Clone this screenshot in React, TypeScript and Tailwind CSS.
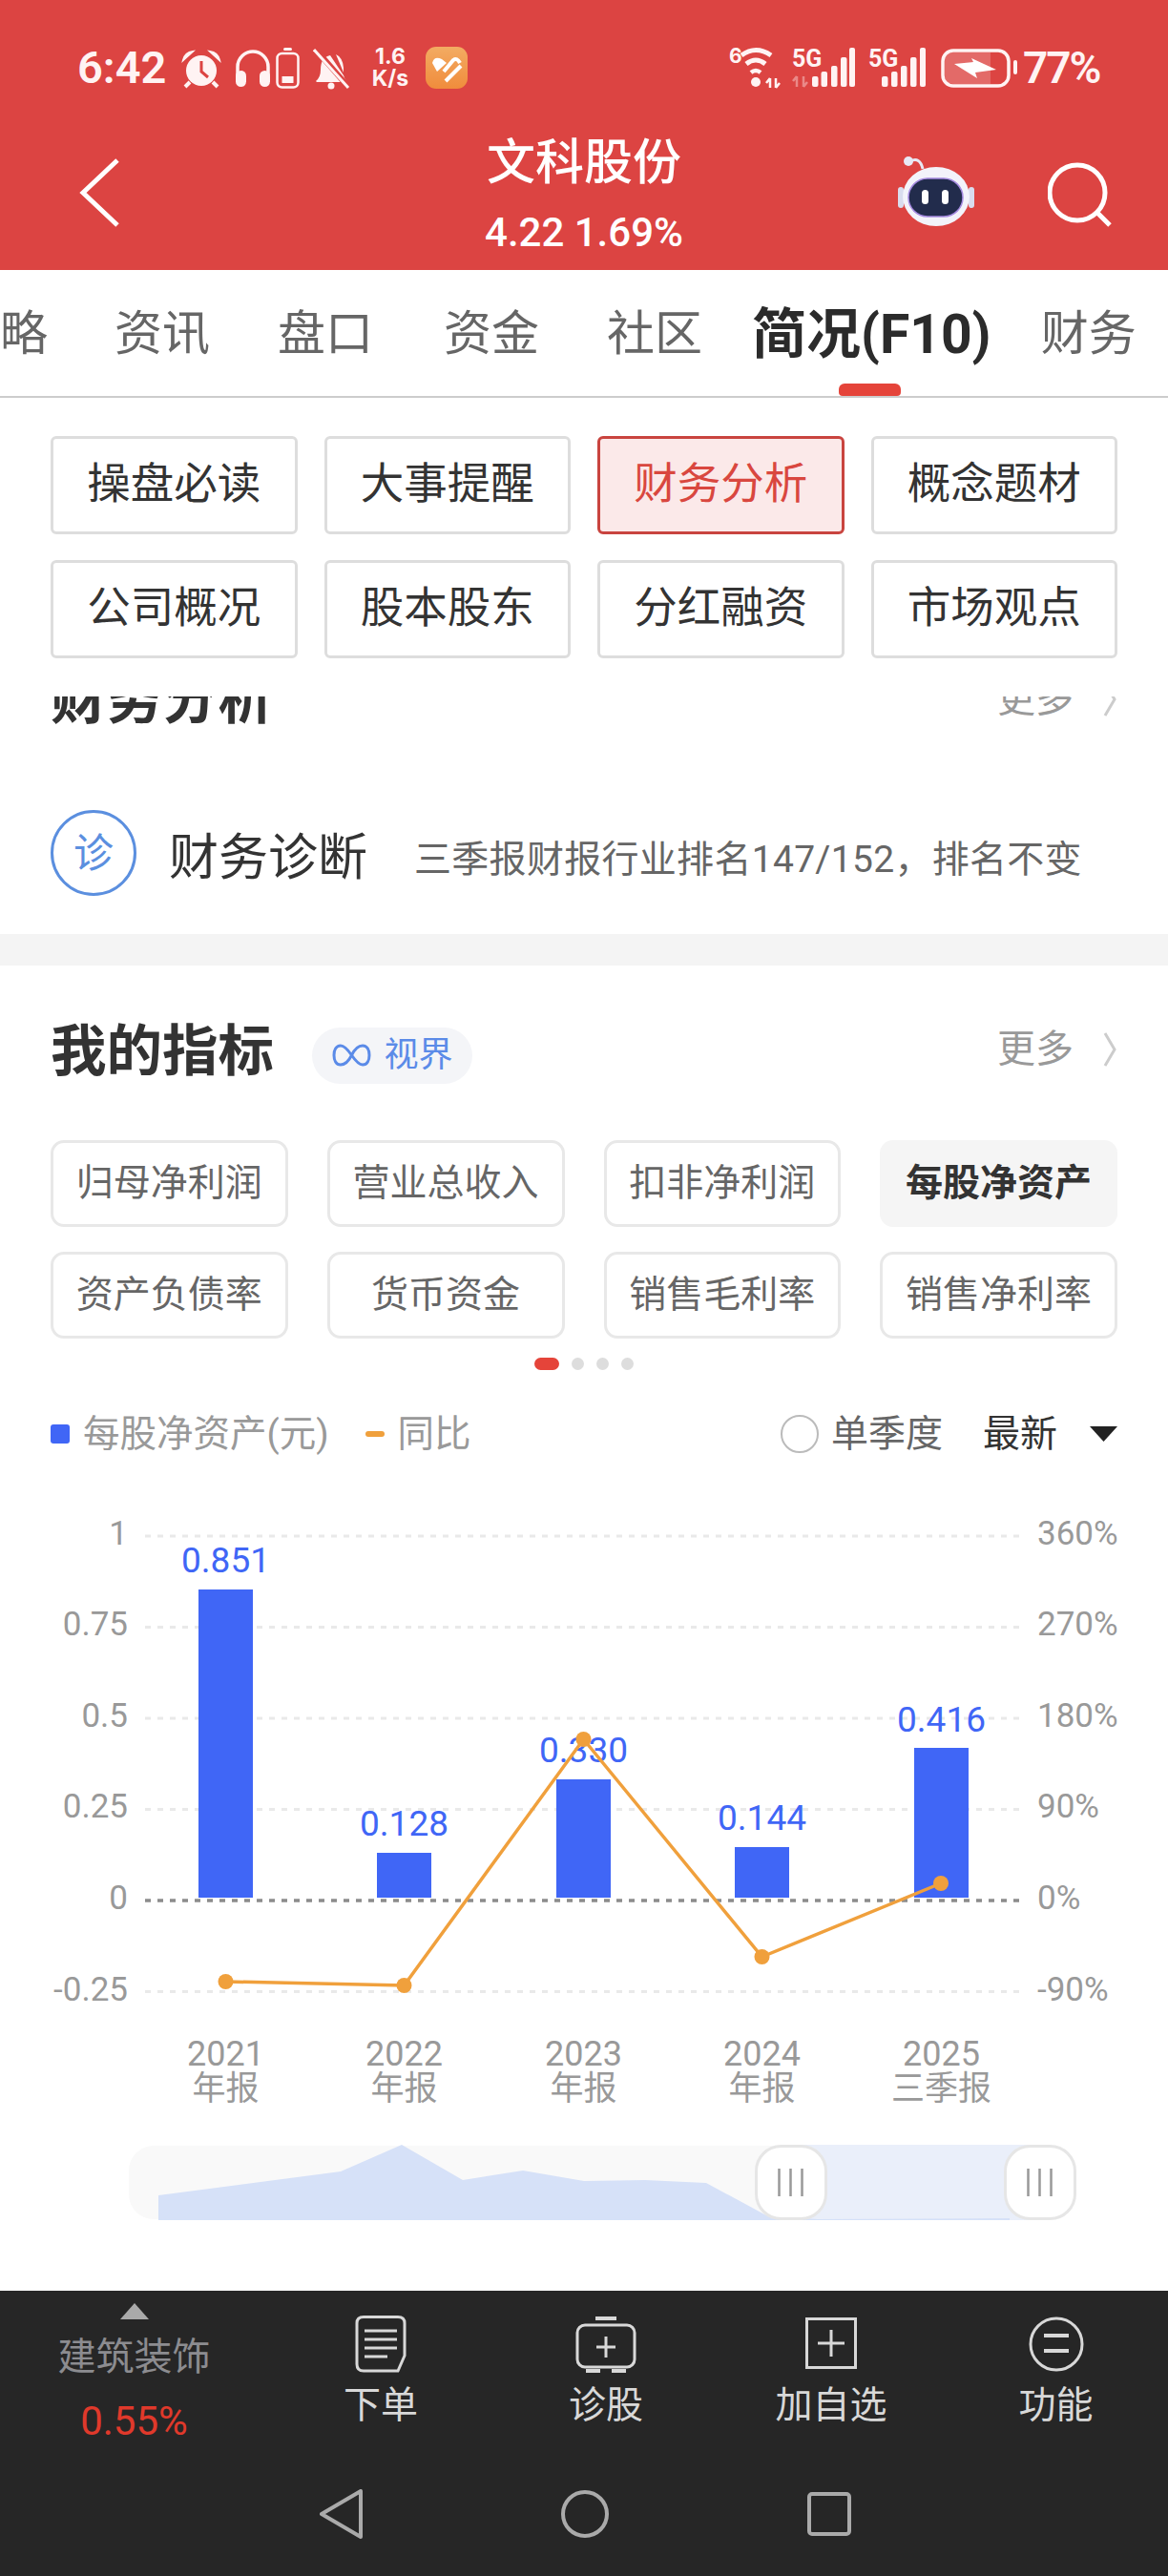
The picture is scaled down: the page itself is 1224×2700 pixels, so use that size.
const tabs = [
  { label: "略", cls: "ml-0 text-[#666] text-[50px] font-normal" },
  { label: "资讯", cls: "ml-[70px] text-[#666] text-[50px] font-normal" },
  { label: "盘口", cls: "ml-[71px] text-[#666] text-[50px] font-normal" },
  { label: "资金", cls: "ml-[74px] text-[#666] text-[50px] font-normal" },
  { label: "社区", cls: "ml-[71px] text-[#666] text-[50px] font-normal" },
  { label: "简况(F10)", cls: "ml-[52px] text-[#2b2b2b] text-[57px] font-bold" },
  { label: "财务", cls: "ml-[52px] text-[#666] text-[50px] font-normal" },
];

const shortcuts = ["操盘必读", "大事提醒", "财务分析", "概念题材", "公司概况", "股本股东", "分红融资", "市场观点"];
const metrics = ["归母净利润", "营业总收入", "扣非净利润", "每股净资产", "资产负债率", "货币资金", "销售毛利率", "销售净利率"];

const grid = [1610, 1705.5, 1801, 1896.5, 2087.5];
const leftAxis = [
  ["1", 1607],
  ["0.75", 1702],
  ["0.5", 1798],
  ["0.25", 1893],
  ["0", 1989],
  ["-0.25", 2085],
];
const rightAxis = [
  ["360%", 1607],
  ["270%", 1702],
  ["180%", 1798],
  ["90%", 1893],
  ["0%", 1989],
  ["-90%", 2085],
];
const bars = [
  { x: 208, top: 1666, value: "0.851", labelY: 1635, year: "2021", kind: "年报" },
  { x: 395, top: 1942, value: "0.128", labelY: 1911, year: "2022", kind: "年报" },
  { x: 583, top: 1865, value: "0.330", labelY: 1834, year: "2023", kind: "年报" },
  { x: 770, top: 1936, value: "0.144", labelY: 1905, year: "2024", kind: "年报" },
  { x: 958, top: 1832, value: "0.416", labelY: 1802, year: "2025", kind: "三季报" },
];
const yoy = [
  [236.5, 2077],
  [423.5, 2081],
  [611.5, 1823],
  [798.5, 2051],
  [986, 1974],
];

function StatusBar() {
  return (
    <div className="flex h-[112px] items-start pl-[81px] pt-[49px] text-[#fff3f3]">
      <span className="mt-[-3px] w-[100px] font-['Roboto'] text-[47px] leading-[50px] font-semibold">6:42</span>
      <svg className="ml-[9px] mt-[3px] h-[41px] w-[42px]" viewBox="0 0 42 41">
        <circle cx="21" cy="22" r="16" fill="#fff3f3" />
        <path d="M2 11 Q4 3 12 2 Z M40 11 Q38 3 30 2 Z" fill="#fff3f3" stroke="#fff3f3" strokeWidth="2" />
        <path d="M21 12 V23 L28 29" fill="none" stroke="#dc4442" strokeWidth="3" />
        <path d="M9 34 L4 39 M33 34 L38 39" stroke="#fff3f3" strokeWidth="4" />
      </svg>
      <svg className="ml-[14px] mt-[3px] h-[40px] w-[38px]" viewBox="0 0 38 40">
        <path d="M3 28 V18 A16 16 0 0 1 35 18 V28" fill="none" stroke="#fff3f3" strokeWidth="3.5" />
        <rect x="1" y="22" width="11" height="17" rx="5.5" fill="#fff3f3" />
        <rect x="26" y="22" width="11" height="17" rx="5.5" fill="#fff3f3" />
      </svg>
      <svg className="ml-[5px] mt-[1px] h-[43px] w-[25px]" viewBox="0 0 25 43">
        <rect x="8" y="0" width="9" height="3" rx="1.5" fill="#fff3f3" />
        <rect x="1.5" y="6" width="22" height="35.5" rx="5" fill="none" stroke="#fff3f3" strokeWidth="2.5" />
        <rect x="6.5" y="30" width="12" height="7" fill="#fff3f3" />
      </svg>
      <svg className="ml-[14px] mt-[2px] h-[43px] w-[39px]" viewBox="0 0 39 43">
        <path d="M3 34 Q8 30 8 22 Q8 9 18 7 L32 28 Q33 32 36 35 H4 Z" fill="#fff3f3" />
        <path d="M24 6 Q31 9 32 20 V25 Z" fill="#fff3f3" />
        <circle cx="19" cy="39" r="3.5" fill="#fff3f3" />
        <path d="M3 1 L37 40" stroke="#dc4442" strokeWidth="6" />
        <path d="M1 1 L37 41" stroke="#fff3f3" strokeWidth="3" />
      </svg>
      <div className="ml-[21px] mt-[-1px] flex w-[42px] flex-col items-center font-['Inter'] text-[23px] leading-[23px] font-bold">
        <span>1.6</span>
        <span>K/s</span>
      </div>
      <svg className="ml-[16px] h-[44px] w-[44px]" viewBox="0 0 44 44">
        <defs>
          <linearGradient id="tile" x1="0" y1="0" x2="0" y2="1">
            <stop offset="0" stopColor="#f3ab62" />
            <stop offset="1" stopColor="#f08c3c" />
          </linearGradient>
        </defs>
        <rect width="44" height="44" rx="11" fill="url(#tile)" />
        <path d="M7 17 Q9 9 17 13 L22 17 L12 26 Z" fill="#fff" />
        <path d="M19 26 L29 14 Q33 11 36 17" fill="none" stroke="#fff" strokeWidth="4" />
        <path d="M21 36 L37 20" stroke="#fff" strokeWidth="4" />
      </svg>
      <svg className="ml-[274px] h-[46px] w-[57px] overflow-visible" viewBox="0 0 57 46">
        <text x="0" y="17" fill="#fff3f3" fontSize="21" fontWeight="700" fontFamily="Inter">6</text>
        <path d="M13 9 Q28 -2 44 9" fill="none" stroke="#fff3f3" strokeWidth="5" />
        <path d="M18 18 Q28 10 38 18" fill="none" stroke="#fff3f3" strokeWidth="5" />
        <path d="M23 27 Q28 23 33 27" fill="none" stroke="#fff3f3" strokeWidth="4.5" />
        <circle cx="28" cy="37" r="5" fill="#fff3f3" />
        <path d="M43 33 V43 M49 33 V43 M39 38 L43 33 M53 38 L49 43" stroke="#fff3f3" strokeWidth="2.5" fill="none" />
      </svg>
      <svg className="ml-[9px] h-[46px] w-[66px] overflow-visible" viewBox="0 0 66 46">
        <text x="0" y="21" fill="#fff3f3" fontSize="25" fontWeight="700" fontFamily="Roboto">5G</text>
        <path d="M5 31 V42 M12 31 V42 M1 36 L5 31 M16 37 L12 42" stroke="#fff3f3" strokeOpacity="0.4" strokeWidth="2.5" fill="none" />
        <rect x="21" y="31" width="6.5" height="11" rx="2" fill="#fff3f3" />
        <rect x="30.5" y="26" width="6.5" height="16" rx="2" fill="#fff3f3" />
        <rect x="41" y="20" width="6.5" height="22" rx="2" fill="#fff3f3" />
        <rect x="51" y="11" width="6.5" height="31" rx="2" fill="#fff3f3" />
        <rect x="60" y="1" width="6" height="41" rx="2" fill="#fff3f3" />
      </svg>
      <svg className="ml-[14px] h-[46px] w-[60px] overflow-visible" viewBox="0 0 60 46">
        <text x="0" y="21" fill="#fff3f3" fontSize="25" fontWeight="700" fontFamily="Roboto">5G</text>
        <rect x="14" y="31" width="6.5" height="11" rx="2" fill="#fff3f3" />
        <rect x="24" y="26" width="6.5" height="16" rx="2" fill="#fff3f3" />
        <rect x="34" y="20" width="6.5" height="22" rx="2" fill="#fff3f3" />
        <rect x="44" y="11" width="6.5" height="31" rx="2" fill="#fff3f3" />
        <rect x="54" y="1" width="6" height="41" rx="2" fill="#fff3f3" />
      </svg>
      <svg className="ml-[16px] mt-[2px] h-[41px] w-[80px]" viewBox="0 0 80 41">
        <rect x="2" y="2" width="69" height="37" rx="11" fill="none" stroke="#fff3f3" strokeWidth="3.5" />
        <path d="M4 13 Q4 4 13 4 H52 V37 H13 Q4 37 4 28 Z" fill="#fff3f3" fillOpacity="0.22" />
        <path d="M14 16 L34 14 L32 10 L58 22 L36 25 L38 31 Z" fill="#fff" />
        <rect x="76" y="12" width="4" height="15" rx="2" fill="#fff3f3" />
      </svg>
      <span className="ml-[6px] mt-[-3px] font-['Roboto'] text-[46px] leading-[50px] font-semibold tracking-[-2px]">77%</span>
    </div>
  );
}

function TitleBar() {
  return (
    <div className="relative flex h-[171px] items-start">
      <svg className="ml-[82px] mt-[54px] h-[72px] w-[44px]" viewBox="0 0 44 72">
        <path d="M41 2 L5 36 L41 70" fill="none" stroke="#fff" strokeWidth="5" />
      </svg>
      <div className="absolute left-[412px] top-[25px] flex w-[400px] flex-col items-center text-white">
        <span className="mt-[3px] text-[51px] leading-[62px] font-medium">文科股份</span>
        <span className="mt-[17px] text-[42px] leading-[50px] font-medium">4.22 1.69%</span>
      </div>
      <svg className="ml-[814px] mt-[52px] h-[74px] w-[84px]" viewBox="0 0 84 74">
        <path d="M14 5 Q24 0 27 13" fill="none" stroke="#e8e8f4" strokeWidth="3" />
        <circle cx="12" cy="5" r="5" fill="#e8e8f4" />
        <rect x="1" y="32" width="6" height="22" rx="3" fill="#d9dcee" />
        <rect x="75" y="32" width="6" height="22" rx="3" fill="#d9dcee" />
        <ellipse cx="41" cy="42" rx="35" ry="31" fill="#f3f3fa" />
        <rect x="12" y="23" width="57" height="40" rx="20" fill="#222c4c" stroke="#a58ae0" strokeWidth="1.5" />
        <rect x="26" y="35" width="7" height="15" rx="3.5" fill="#fff" />
        <rect x="47" y="35" width="7" height="15" rx="3.5" fill="#fff" />
      </svg>
      <svg className="ml-[74px] mt-[58px] h-[72px] w-[72px]" viewBox="0 0 72 72">
        <circle cx="31" cy="32" r="29" fill="none" stroke="#fff" strokeWidth="5" />
        <path d="M52 53 L65 66" stroke="#fff" strokeWidth="5" />
      </svg>
    </div>
  );
}

function MoreLink() {
  return (
    <div className="flex items-center">
      <span className="text-[40px] leading-[58px] text-[#999]">更多</span>
      <svg className="ml-[31px] h-[38px] w-[15px]" viewBox="0 0 15 38">
        <path d="M2 2 L12 19 L2 36" fill="none" stroke="#ccc" strokeWidth="3" />
      </svg>
    </div>
  );
}

function Chart() {
  return (
    <svg className="h-[800px] w-[1224px]" viewBox="0 1560 1224 800" fontFamily="Roboto, 'Noto Sans CJK SC', sans-serif">
      {grid.map((y) => (
        <line key={y} x1="152" x2="1070" y1={y} y2={y} stroke="#e9e9e9" strokeWidth="3" strokeDasharray="6 7" />
      ))}
      {leftAxis.map(([t, y]) => (
        <text key={t} x="134" y={y} textAnchor="end" dominantBaseline="central" fontSize="35" fill="#999">{t}</text>
      ))}
      {rightAxis.map(([t, y]) => (
        <text key={t} x="1087" y={y} dominantBaseline="central" fontSize="35" fill="#999">{t}</text>
      ))}
      {bars.map((b) => (
        <g key={b.year}>
          <rect x={b.x} y={b.top} width="57" height={1989 - b.top} fill="#4066f6" />
          <text x={b.x + 28.5} y={b.labelY} textAnchor="middle" dominantBaseline="central" fontSize="37" fill="#4066f6">{b.value}</text>
          <text x={b.x + 28.5} y="2153" textAnchor="middle" dominantBaseline="central" fontSize="36" fill="#999">{b.year}</text>
          <text x={b.x + 28.5} y="2189" textAnchor="middle" dominantBaseline="central" fontSize="35" fill="#999">{b.kind}</text>
        </g>
      ))}
      <line x1="152" x2="1070" y1="1992" y2="1992" stroke="#8c8c8c" strokeWidth="3.5" strokeDasharray="6 7" />
      <polyline points={yoy.map((p) => p.join(",")).join(" ")} fill="none" stroke="#f0a03c" strokeWidth="3.5" />
      {yoy.map(([x, y]) => (
        <circle key={x} cx={x} cy={y} r="8" fill="#f0a03c" />
      ))}

      <rect x="135" y="2249" width="960" height="77" rx="26" fill="#f9f9f9" />
      <rect x="826" y="2248" width="269" height="79" fill="#eaeffa" />
      <polygon
        points="166,2301 357,2276 421,2248 485,2285 548,2275 612,2286 676,2285 740,2288 803,2322 856,2326 1058,2325 1058,2327 166,2327"
        fill="#d6e1f8"
      />
      {[792.5, 1053.5].map((x) => (
        <g key={x}>
          <rect x={x} y="2249.5" width="73" height="76" rx="26" fill="#fff" stroke="#e6e6e6" strokeWidth="3" />
          {[24, 36, 48].map((o) => (
            <line key={o} x1={x + o} x2={x + o} y1="2273" y2="2302" stroke="#999" strokeWidth="2.5" />
          ))}
        </g>
      ))}
    </svg>
  );
}

function BottomNav() {
  return (
    <div className="h-[299px] bg-[#262626]">
      <div className="flex h-[190px]">
        <div className="flex w-[281px] flex-col items-center">
          <svg className="mt-[13px] h-[17px] w-[30px]" viewBox="0 0 30 17">
            <path d="M15 0 L30 17 H0 Z" fill="#aaa" />
          </svg>
          <span className="mt-[16px] text-[40px] leading-[48px] text-[#8c8c90]">建筑装饰</span>
          <span className="mt-[20px] text-[42px] leading-[46px] text-[#e0392b]">0.55%</span>
        </div>
        <div className="flex w-[236px] flex-col items-center pt-[26px]">
          <svg className="h-[60px] w-[54px]" viewBox="0 0 54 60" fill="none" stroke="#d8d8d8">
            <path d="M9 1.5 H45 Q52 1.5 52 8 V42 L45 58 H9 Q2 58 2 51 V8 Q2 1.5 9 1.5 Z" strokeWidth="3" />
            <path d="M10 16 H44 M10 25 H44 M10 34 H44 M10 43 H34" strokeWidth="3" />
          </svg>
          <span className="mt-[11px] text-[39px] leading-[46px] text-[#d8d8d8]">下单</span>
        </div>
        <div className="flex w-[236px] flex-col items-center pt-[26px]">
          <svg className="h-[60px] w-[64px]" viewBox="0 0 64 60" fill="none" stroke="#d8d8d8">
            <path d="M21 3 H43" strokeWidth="4" />
            <rect x="2" y="10" width="60" height="44" rx="8" strokeWidth="3" />
            <path d="M32 22 V44 M22 33 H42" strokeWidth="3" />
            <path d="M11 58 H26 M38 58 H53" strokeWidth="4" />
          </svg>
          <span className="mt-[11px] text-[39px] leading-[46px] text-[#d8d8d8]">诊股</span>
        </div>
        <div className="flex w-[236px] flex-col items-center pt-[26px]">
          <svg className="h-[60px] w-[54px]" viewBox="0 0 54 60" fill="none" stroke="#d8d8d8">
            <rect x="1.5" y="3.5" width="51" height="51" strokeWidth="3" />
            <path d="M27 15 V43 M13 29 H41" strokeWidth="3" />
          </svg>
          <span className="mt-[11px] text-[39px] leading-[46px] text-[#d8d8d8]">加自选</span>
        </div>
        <div className="flex w-[235px] flex-col items-center pt-[26px]">
          <svg className="h-[60px] w-[58px]" viewBox="0 0 58 60" fill="none" stroke="#d8d8d8">
            <circle cx="29" cy="30" r="27" strokeWidth="3" />
            <path d="M16 21 H42 M16 37 H42" strokeWidth="4" />
          </svg>
          <span className="mt-[11px] text-[39px] leading-[46px] text-[#d8d8d8]">功能</span>
        </div>
      </div>
      <div className="flex items-center gap-[208px] pl-[335px] pt-[18px]">
        <svg className="h-[52px] w-[45px]" viewBox="0 0 45 52" fill="none" stroke="#aaa" strokeWidth="4" strokeLinejoin="round">
          <path d="M43 2 V50 L2 26 Z" />
        </svg>
        <svg className="h-[52px] w-[50px]" viewBox="0 0 50 52" fill="none" stroke="#aaa" strokeWidth="4">
          <circle cx="25" cy="26" r="23" />
        </svg>
        <svg className="h-[46px] w-[46px]" viewBox="0 0 46 46" fill="none" stroke="#aaa" strokeWidth="4">
          <rect x="2" y="2" width="42" height="42" rx="3" />
        </svg>
      </div>
    </div>
  );
}

export default function App() {
  return (
    <div className="flex h-[2700px] w-[1224px] flex-col overflow-hidden bg-white font-['Roboto','Noto_Sans_CJK_SC',sans-serif]">
      <header className="h-[283px] bg-[#dc4442]">
        <StatusBar />
        <TitleBar />
      </header>

      <nav className="relative flex h-[134px] items-center overflow-hidden border-b-2 border-[#ccc] bg-white pt-[3px] whitespace-nowrap">
        {tabs.map((t) => (
          <span key={t.label} className={t.cls}>{t.label}</span>
        ))}
        <span className="absolute bottom-0 left-[879px] h-[13px] w-[65px] rounded-t-md rounded-b-sm bg-[#e5443a]" />
      </nav>

      <div className="relative z-10 grid h-[313px] grid-cols-4 content-start gap-x-[28px] gap-y-[27px] bg-white px-[53px] pt-[40px]">
        {shortcuts.map((s) => (
          <div
            key={s}
            className={
              s === "财务分析"
                ? "flex h-[103px] items-center justify-center rounded-[6px] border-[3px] border-[#c9443f] bg-[#fbe9e9] text-[45.5px] text-[#d9473f]"
                : "flex h-[103px] items-center justify-center rounded-[6px] border-[3px] border-[#ddd] bg-white text-[45.5px] text-[#333]"
            }
          >
            {s}
          </div>
        ))}
      </div>

      <section className="h-[249px] overflow-hidden px-[53px]">
        <div className="-mt-[26px] flex h-[58px] items-center justify-between">
          <span className="text-[58.5px] leading-[58px] font-bold text-[#333]">财务分析</span>
          <MoreLink />
        </div>
        <div className="mt-[87px] flex items-center">
          <div className="flex h-[90px] w-[90px] items-center justify-center rounded-full border-[3px] border-[#5b8fdf] text-[42px] text-[#5b8fdf]">诊</div>
          <span className="ml-[34px] mt-[11px] text-[52px] leading-[60px] text-[#333]">财务诊断</span>
          <span className="ml-[49px] mt-[13px] text-[39px] leading-[50px] tracking-[0.3px] text-[#666]">三季报财报行业排名147/152，排名不变</span>
        </div>
      </section>

      <div className="h-[33px] bg-[#f4f4f4]" />

      <section className="px-[53px] pt-[59px]">
        <div className="flex h-[58px] items-center">
          <span className="mt-[4px] text-[58.5px] leading-[58px] font-bold text-[#333]">我的指标</span>
          <div className="ml-[40px] mt-[12px] flex h-[59px] w-[168px] items-center justify-center gap-[14px] rounded-full bg-[#f4f5f8]">
            <svg className="h-[24px] w-[41px]" viewBox="0 0 41 24" fill="none" stroke="#5b8be8" strokeWidth="3">
              <path d="M20.5 12 C15 4 12 2 9 2 C4 2 2 7 2 12 C2 17 4 22 9 22 C14 22 18 17 20.5 12 C23 7 27 2 32 2 C37 2 39 7 39 12 C39 17 37 22 32 22 C29 22 26 20 20.5 12 Z" />
            </svg>
            <span className="text-[36px] leading-[40px] text-[#5b8be8]">视界</span>
          </div>
          <div className="ml-auto">
            <MoreLink />
          </div>
        </div>

        <div className="mt-[66px] grid grid-cols-4 gap-x-[41px] gap-y-[26px]">
          {metrics.map((m) => (
            <div
              key={m}
              className={
                m === "每股净资产"
                  ? "flex h-[91px] items-center justify-center rounded-[14px] bg-[#f5f5f5] text-[39px] font-bold text-[#333]"
                  : "flex h-[91px] items-center justify-center rounded-[14px] border-[3px] border-[#e8e8e8] text-[39px] text-[#666]"
              }
            >
              {m}
            </div>
          ))}
        </div>

        <div className="mt-[20px] flex justify-center gap-[13px]">
          <span className="h-[13px] w-[26px] rounded-full bg-[#e5443a]" />
          <span className="h-[13px] w-[13px] rounded-full bg-[#ddd]" />
          <span className="h-[13px] w-[13px] rounded-full bg-[#ddd]" />
          <span className="h-[13px] w-[13px] rounded-full bg-[#ddd]" />
        </div>

        <div className="mt-[47px] flex h-[40px] items-center text-[38.5px]">
          <span className="h-[20px] w-[20px] rounded-[3px] bg-[#4066f6]" />
          <span className="ml-[14px] text-[#999]">每股净资产(元)</span>
          <span className="ml-[38px] h-[6px] w-[20px] rounded-full bg-[#f0a03c]" />
          <span className="ml-[14px] text-[#999]">同比</span>
          <span className="ml-auto h-[40px] w-[40px] rounded-full border-[2px] border-[#bbb]" />
          <span className="ml-[13px] text-[39px] text-[#666]">单季度</span>
          <span className="ml-[42px] text-[39px] text-[#333]">最新</span>
          <svg className="ml-[34px] h-[16px] w-[29px]" viewBox="0 0 29 16">
            <path d="M0 0 H29 L14.5 16 Z" fill="#222" />
          </svg>
        </div>
      </section>

      <div className="mt-[37px]">
        <Chart />
      </div>

      <div className="flex-1" />
      <BottomNav />
    </div>
  );
}
